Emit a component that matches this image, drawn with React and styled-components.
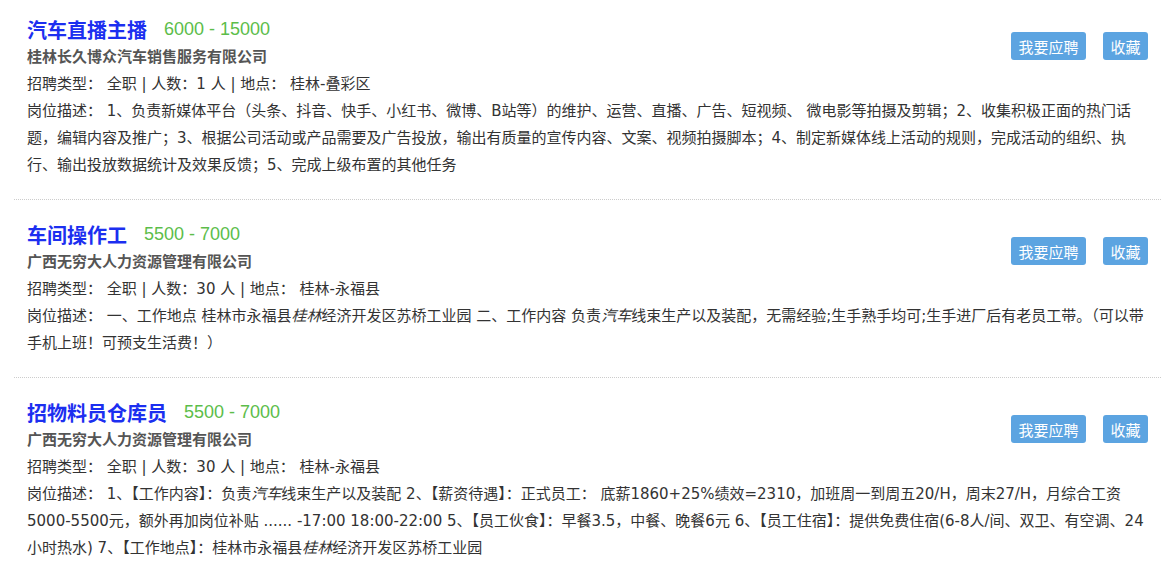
import React from 'react'
import styled, { createGlobalStyle } from 'styled-components'

const GlobalStyle = createGlobalStyle`
    body {
        margin: 0;
        background: #fff;
        font-family: "Liberation Sans", "Noto Sans CJK SC", sans-serif;
        color: #333;
    }
`

const List = styled.div`
    padding: 0 14px;
`

const Item = styled.div`
    display: grid;
    grid-template-columns: 1fr auto;
    padding: 20px 13px;
    border-bottom: 1px dotted #ccc;
    &:first-child {
        padding-top: 15px;
    }
`

const TitleRow = styled.div`
    grid-column: 1;
    display: flex;
    align-items: center;
    height: 28px;
`

const Title = styled.a`
    font-size: 20px;
    font-weight: bold;
    color: #1c2ff0;
    text-decoration: none;
`

const Salary = styled.span`
    margin-left: 17px;
    font-size: 18px;
    color: #5cbd4a;
`

const Company = styled.div`
    grid-column: 1;
    font-size: 15px;
    font-weight: bold;
    color: #555;
    line-height: 28px;
`

const Actions = styled.div`
    grid-column: 2;
    grid-row: 1 / 3;
    align-self: start;
    display: flex;
    gap: 17px;
    margin-top: 17px;
`

const Button = styled.button`
    height: 28px;
    padding: 0 7.5px;
    border: none;
    border-radius: 3px;
    background: #5ca4e1;
    color: #fff;
    font-family: inherit;
    font-size: 15px;
    cursor: pointer;
`

const Line = styled.div`
    grid-column: 1 / -1;
    font-family: "DejaVu Sans", "Noto Sans CJK SC", sans-serif;
    font-size: 15px;
    line-height: 27px;
`

const Em = styled.i`
    font-style: italic;
`

const jobs = [
    {
        id: 1,
        title: '汽车直播主播',
        salary: '6000 - 15000',
        company: '桂林长久博众汽车销售服务有限公司',
        count: '1',
        place: '桂林-叠彩区',
        desc: <>1、负责新媒体平台（头条、抖音、快手、小红书、微博、B站等）的维护、运营、直播、广告、短视频、 微电影等拍摄及剪辑；2、收集积极正面的热门话题，编辑内容及推广；3、根据公司活动或产品需要及广告投放，输出有质量的宣传内容、文案、视频拍摄脚本；4、制定新媒体线上活动的规则，完成活动的组织、执行、输出投放数据统计及效果反馈；5、完成上级布置的其他任务</>,
    },
    {
        id: 2,
        title: '车间操作工',
        salary: '5500 - 7000',
        company: '广西无穷大人力资源管理有限公司',
        count: '30',
        place: '桂林-永福县',
        desc: <>一、工作地点 桂林市永福县<Em>桂林</Em>经济开发区苏桥工业园 二、工作内容 负责<Em>汽车</Em>线束生产以及装配，无需经验;生手熟手均可;生手进厂后有老员工带。（可以带手机上班！可预支生活费！）</>,
    },
    {
        id: 3,
        title: '招物料员仓库员',
        salary: '5500 - 7000',
        company: '广西无穷大人力资源管理有限公司',
        count: '30',
        place: '桂林-永福县',
        desc: <>1、【工作内容】：负责<Em>汽车</Em>线束生产以及装配 2、【薪资待遇】：正式员工： 底薪1860+25%绩效=2310，加班周一到周五20/H，周末27/H，月综合工资5000-5500元，额外再加岗位补贴 ...... -17:00 18:00-22:00 5、【员工伙食】：早餐3.5，中餐、晚餐6元 6、【员工住宿】：提供免费住宿(6-8人/间、双卫、有空调、24小时热水) 7、【工作地点】：桂林市永福县<Em>桂林</Em>经济开发区苏桥工业园</>,
    },
]

const App = () => {
    return (
        <>
            <GlobalStyle />
            <List>
                {jobs.map(job => (
                    <Item key={job.id}>
                        <TitleRow>
                            <Title href="#">{job.title}</Title>
                            <Salary>{job.salary}</Salary>
                        </TitleRow>
                        <Actions>
                            <Button>我要应聘</Button>
                            <Button>收藏</Button>
                        </Actions>
                        <Company>{job.company}</Company>
                        <Line>招聘类型： 全职 | 人数：{job.count} 人 | 地点： {job.place}</Line>
                        <Line>岗位描述： {job.desc}</Line>
                    </Item>
                ))}
            </List>
        </>
    )
}

export default App
